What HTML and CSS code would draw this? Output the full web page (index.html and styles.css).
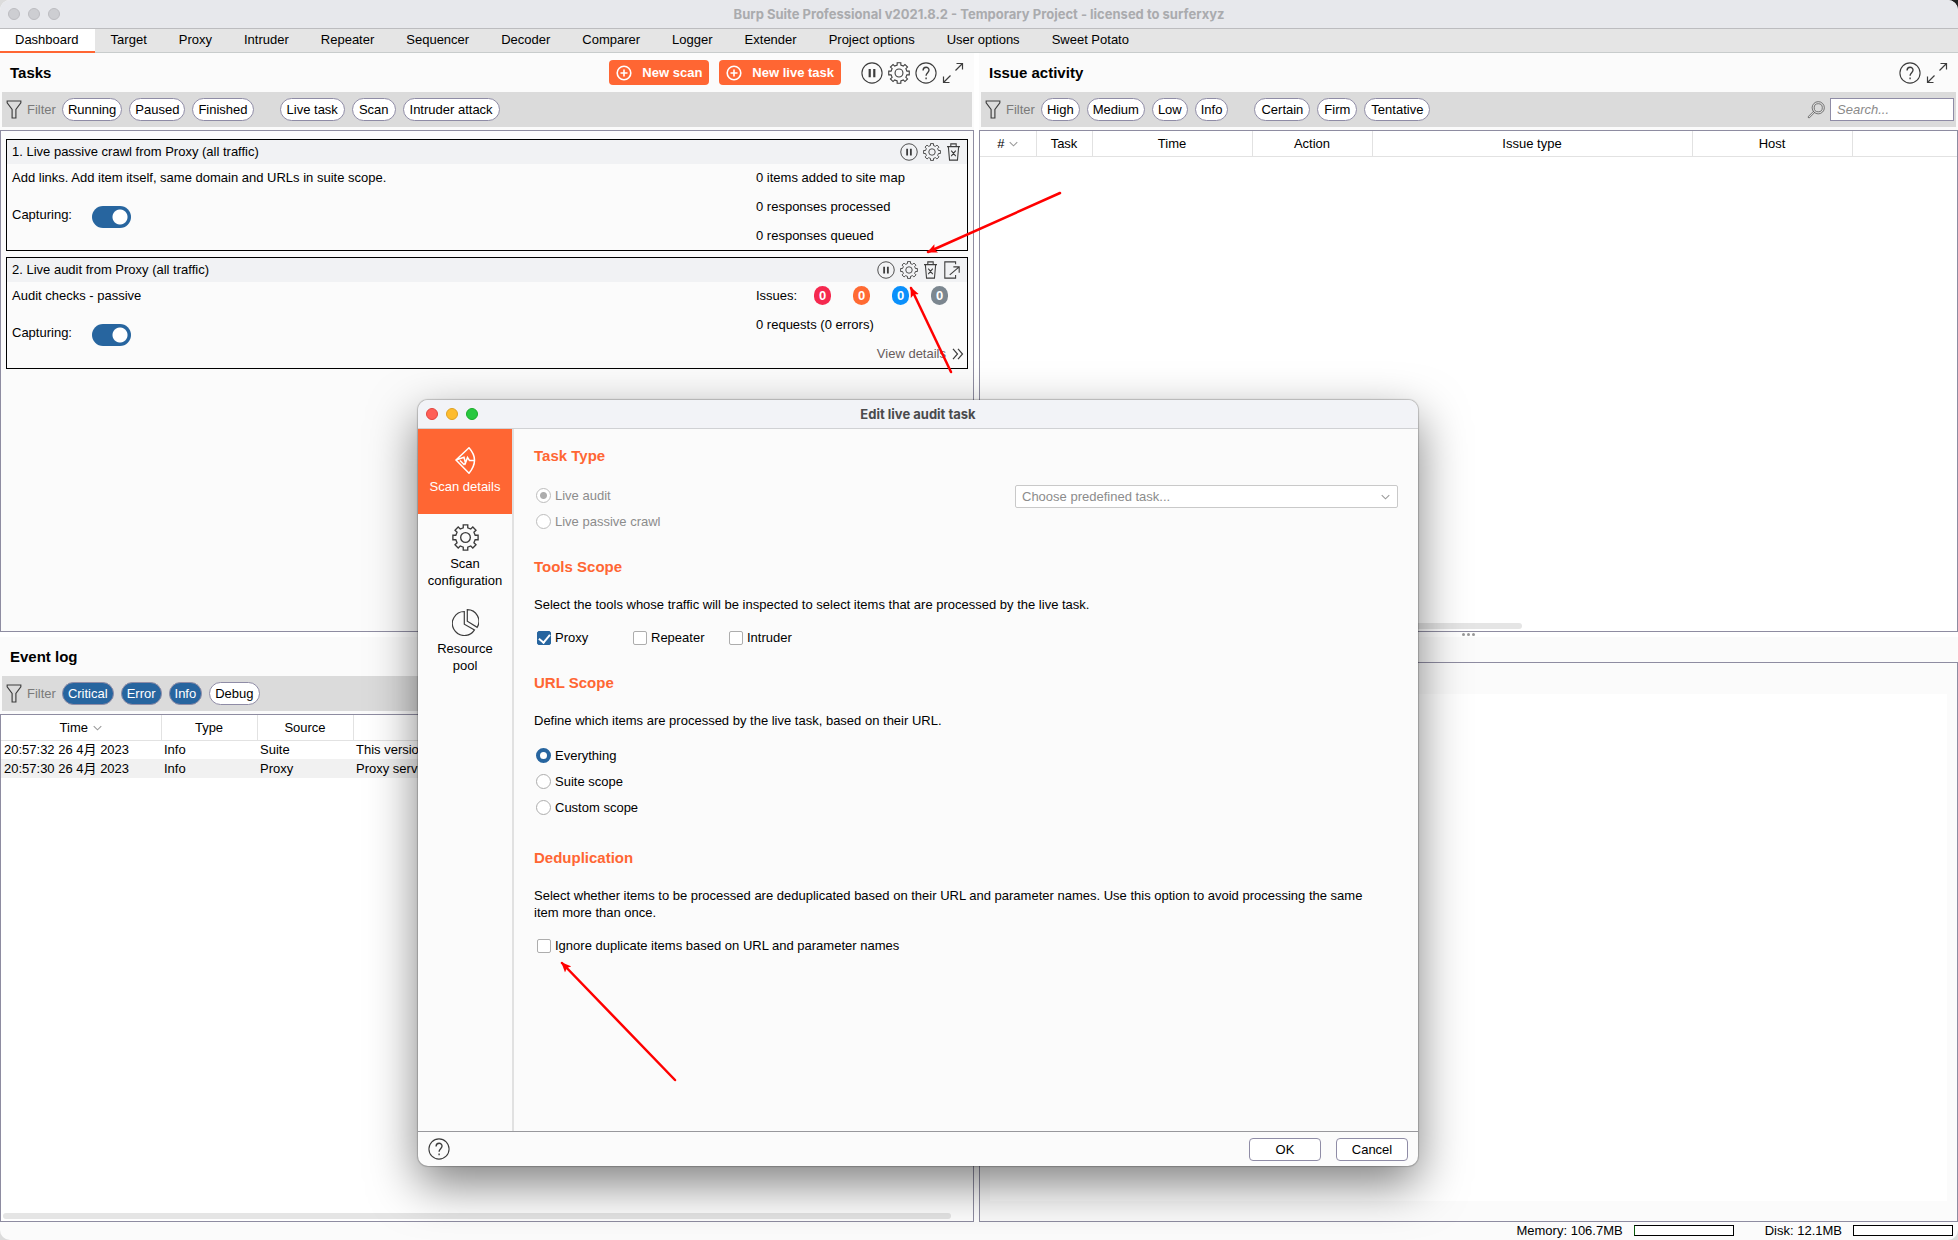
FILE: index.html
```html
<!DOCTYPE html>
<html lang="en">
<head>
<meta charset="utf-8">
<title>Burp Suite Professional</title>
<link rel="stylesheet" href="styles.css">
</head>
<body>
<svg class="defs" aria-hidden="true">
  <symbol id="i-pause" viewBox="0 0 24 24"><circle cx="12" cy="12" r="11"/><path d="M9.5 7.5v9M14.5 7.5v9" stroke-width="2.4"/></symbol>
  <symbol id="i-gear" viewBox="0 0 24 24"><path d="M10 3.4V.8h4v2.6L16.67 4.5 18.5 2.67 21.33 5.5 19.5 7.33 20.6 10H23.2v4H20.6L19.5 16.67 21.33 18.5 18.5 21.33 16.67 19.5 14 20.6V23.2H10V20.6L7.33 19.5 5.5 21.33 2.67 18.5 4.5 16.67 3.4 14H.8V10H3.4L4.5 7.33 2.67 5.5 5.5 2.67 7.33 4.5Z"/><circle cx="12" cy="12" r="4.3"/></symbol>
  <symbol id="i-help" viewBox="0 0 24 24"><circle cx="12" cy="12" r="11"/><path d="M8.8 9.2c0-4.6 6.6-4.4 6.5-.4 0 2.700-3.200 3-3.200 6.200M12.100 17v1.800" stroke-width="1.500"/></symbol>
  <symbol id="i-expand" viewBox="0 0 22 22"><path d="M13.500 8.500 20 2M14.500 1.500h6v6M8.500 13.500 2 20M1.500 14.500v6h6"/></symbol>
  <symbol id="i-trash" viewBox="0 0 16 20"><path d="M.8 4h14.400M5 4V1h6v3M2.300 4.300 3.600 19h8.800L13.700 4.300M5.500 8.500l5 6M10.500 8.500l-5 6"/></symbol>
  <symbol id="i-export" viewBox="0 0 18 20"><path d="M13 3.500V1H1v18h12v-3.500M6.500 15.500 17 6.500M10.500 6.500H17V13"/></symbol>
  <symbol id="i-funnel" viewBox="0 0 16 20"><path d="M.8 1h14.400v2L10 10v9H6v-9L.8 3z"/></symbol>
  <symbol id="i-plus" viewBox="0 0 16 16"><circle cx="8" cy="8" r="6.800"/><path d="M8 4.500v7M4.500 8h7"/></symbol>
  <symbol id="i-sort" viewBox="0 0 10 6"><path d="M.8.8 5 5 9.200.8"/></symbol>
  <symbol id="i-search" viewBox="0 0 20 20"><circle cx="12.500" cy="7.500" r="6.800"/><circle cx="12.500" cy="7.500" r="4.500"/><path d="M7.500 11.200 1 17.700 2.300 19 8.800 12.500"/></symbol>
  <symbol id="i-more" viewBox="0 0 12 12"><path d="M1 .8 5.500 6 1 11.200M6 .8 10.500 6 6 11.200"/></symbol>
  <symbol id="i-scan" viewBox="0 0 27 27"><path d="M4 13 17 .8Q28 13 17 26.200ZM4 13 12 10.200 13.500 16 15.500 10.500 17.500 13.500H23M8 13.500 12 17.500 13.500 16"/></symbol>
  <symbol id="i-pie" viewBox="0 0 27 27"><path d="M12.300 2.500V15.200L22.500 20.900A12 12 0 1 1 12.300 2.500ZM15.300.7A11.600 11.600 0 0 1 25.200 18.300L15.300 12.200Z"/></symbol>
</svg>

<div class="app">
  <header class="titlebar">
    <span class="lights idle"><i></i><i></i><i></i></span>
    <h1 class="window-title">Burp Suite Professional v2021.8.2 - Temporary Project - licensed to surferxyz</h1>
  </header>

  <nav class="tabs">
    <button class="tab active">Dashboard</button>
    <button class="tab">Target</button>
    <button class="tab">Proxy</button>
    <button class="tab">Intruder</button>
    <button class="tab">Repeater</button>
    <button class="tab">Sequencer</button>
    <button class="tab">Decoder</button>
    <button class="tab">Comparer</button>
    <button class="tab">Logger</button>
    <button class="tab">Extender</button>
    <button class="tab">Project options</button>
    <button class="tab">User options</button>
    <button class="tab">Sweet Potato</button>
  </nav>

  <main class="panes">
    <section class="pane">
      <div class="pane-head">
        <h2>Tasks</h2>
        <div class="pane-actions">
          <button class="primary"><svg class="icon16"><use href="#i-plus"/></svg>New scan</button>
          <button class="primary"><svg class="icon16"><use href="#i-plus"/></svg>New live task</button>
        </div>
        <div class="pane-icons">
          <button class="ib" aria-label="Pause"><svg class="icon22"><use href="#i-pause"/></svg></button>
          <button class="ib" aria-label="Settings"><svg class="icon22"><use href="#i-gear"/></svg></button>
          <button class="ib" aria-label="Help"><svg class="icon22"><use href="#i-help"/></svg></button>
          <button class="ib" aria-label="Expand"><svg class="icon22"><use href="#i-expand"/></svg></button>
        </div>
      </div>
      <div class="filter">
        <svg class="funnel"><use href="#i-funnel"/></svg><span class="filter-label">Filter</span>
        <div class="chips"><button class="chip">Running</button><button class="chip">Paused</button><button class="chip">Finished</button></div>
        <div class="chips roomy"><button class="chip">Live task</button><button class="chip">Scan</button><button class="chip">Intruder attack</button></div>
      </div>
      <div class="box task-list">
        <article class="task">
          <header class="task-head">
            <h3>1. Live passive crawl from Proxy (all traffic)</h3>
            <button class="ib" aria-label="Pause"><svg class="icon18"><use href="#i-pause"/></svg></button>
            <button class="ib" aria-label="Settings"><svg class="icon18"><use href="#i-gear"/></svg></button>
            <button class="ib" aria-label="Delete"><svg class="trash"><use href="#i-trash"/></svg></button>
          </header>
          <div class="task-body">
            <div class="task-info">
              <p>Add links. Add item itself, same domain and URLs in suite scope.</p>
              <label class="capture">Capturing:<input type="checkbox" role="switch" class="switch" checked></label>
            </div>
            <div class="task-stats"><p>0 items added to site map</p><p>0 responses processed</p><p>0 responses queued</p></div>
          </div>
        </article>
        <article class="task">
          <header class="task-head">
            <h3>2. Live audit from Proxy (all traffic)</h3>
            <button class="ib" aria-label="Pause"><svg class="icon18"><use href="#i-pause"/></svg></button>
            <button class="ib" aria-label="Settings"><svg class="icon18"><use href="#i-gear"/></svg></button>
            <button class="ib" aria-label="Delete"><svg class="trash"><use href="#i-trash"/></svg></button>
            <button class="ib" aria-label="Open"><svg class="icon18"><use href="#i-export"/></svg></button>
          </header>
          <div class="task-body">
            <div class="task-info">
              <p>Audit checks - passive</p>
              <label class="capture">Capturing:<input type="checkbox" role="switch" class="switch" checked></label>
            </div>
            <div class="task-stats">
              <p class="issues">Issues: <span class="badges"><b class="badge high">0</b><b class="badge medium">0</b><b class="badge low">0</b><b class="badge info">0</b></span></p>
              <p>0 requests (0 errors)</p>
              <p class="more"><a href="#details">View details<svg class="icon12"><use href="#i-more"/></svg></a></p>
            </div>
          </div>
        </article>
      </div>
    </section>

    <section class="pane">
      <div class="pane-head">
        <h2>Issue activity</h2>
        <div class="pane-icons">
          <button class="ib" aria-label="Help"><svg class="icon22"><use href="#i-help"/></svg></button>
          <button class="ib" aria-label="Expand"><svg class="icon22"><use href="#i-expand"/></svg></button>
        </div>
      </div>
      <div class="filter">
        <svg class="funnel"><use href="#i-funnel"/></svg><span class="filter-label">Filter</span>
        <div class="chips"><button class="chip">High</button><button class="chip">Medium</button><button class="chip">Low</button><button class="chip">Info</button></div>
        <div class="chips roomy"><button class="chip">Certain</button><button class="chip">Firm</button><button class="chip">Tentative</button></div>
        <label class="search"><svg class="icon18"><use href="#i-search"/></svg><input type="search" placeholder="Search..." aria-label="Search"></label>
      </div>
      <div class="box plain">
        <table class="grid">
          <colgroup><col class="w56"><col class="w56"><col class="w160"><col class="w120"><col class="w320"><col class="w160"><col></colgroup>
          <thead><tr><th>#<svg class="sort"><use href="#i-sort"/></svg></th><th>Task</th><th>Time</th><th>Action</th><th>Issue type</th><th>Host</th><th></th></tr></thead>
        </table>
        <div class="scroll issue-scroll"></div>
      </div>
    </section>

    <section class="pane">
      <div class="pane-head"><h2>Event log</h2></div>
      <div class="filter">
        <svg class="funnel"><use href="#i-funnel"/></svg><span class="filter-label">Filter</span>
        <div class="chips"><button class="chip on">Critical</button><button class="chip on">Error</button><button class="chip on">Info</button><button class="chip">Debug</button></div>
      </div>
      <div class="box plain">
        <table class="grid">
          <colgroup><col class="w160"><col class="w96"><col class="w96"><col></colgroup>
          <thead><tr><th>Time<svg class="sort"><use href="#i-sort"/></svg></th><th>Type</th><th>Source</th><th></th></tr></thead>
          <tbody>
            <tr><td>20:57:32 26 4月 2023</td><td>Info</td><td>Suite</td><td>This version</td></tr>
            <tr><td>20:57:30 26 4月 2023</td><td>Info</td><td>Proxy</td><td>Proxy service</td></tr>
          </tbody>
        </table>
        <div class="scroll event-scroll"></div>
      </div>
    </section>

    <section class="pane">
      <div class="detail-head"><span class="grip"><i></i><i></i><i></i></span></div>
      <div class="box detail"><div class="detail-view"></div></div>
    </section>
  </main>

  <footer class="status">
    <span>Memory: 106.7MB</span><span class="gauge used"></span>
    <span class="disk">Disk: 12.1MB</span><span class="gauge"></span>
  </footer>

  <section class="dialog" role="dialog" aria-labelledby="dlg-title">
    <header class="dialog-title">
      <span class="lights"><i class="red"></i><i class="amber"></i><i class="green"></i></span>
      <h2 id="dlg-title" class="window-title">Edit live audit task</h2>
    </header>
    <div class="dialog-main">
      <nav class="side">
        <button class="side-item current"><svg class="icon27"><use href="#i-scan"/></svg>Scan details</button>
        <button class="side-item"><svg class="icon27"><use href="#i-gear"/></svg>Scan configuration</button>
        <button class="side-item"><svg class="icon27"><use href="#i-pie"/></svg>Resource<br>pool</button>
      </nav>
      <form class="options">
        <section>
          <h3>Task Type</h3>
          <div class="type-row">
            <div class="radios">
              <label class="off"><input type="radio" name="type" checked disabled>Live audit</label>
              <label class="off"><input type="radio" name="type" disabled>Live passive crawl</label>
            </div>
            <div class="select"><select disabled aria-label="Predefined task"><option>Choose predefined task...</option></select><svg class="sort"><use href="#i-sort"/></svg></div>
          </div>
        </section>
        <section>
          <h3>Tools Scope</h3>
          <p>Select the tools whose traffic will be inspected to select items that are processed by the live task.</p>
          <div class="checks">
            <label><input type="checkbox" checked>Proxy</label>
            <label><input type="checkbox">Repeater</label>
            <label><input type="checkbox">Intruder</label>
          </div>
        </section>
        <section class="scope">
          <h3>URL Scope</h3>
          <p>Define which items are processed by the live task, based on their URL.</p>
          <div class="radios">
            <label><input type="radio" name="scope" checked>Everything</label>
            <label><input type="radio" name="scope">Suite scope</label>
            <label><input type="radio" name="scope">Custom scope</label>
          </div>
        </section>
        <section>
          <h3>Deduplication</h3>
          <p>Select whether items to be processed are deduplicated based on their URL and parameter names. Use this option to avoid processing the same item more than once.</p>
          <div class="checks"><label><input type="checkbox">Ignore duplicate items based on URL and parameter names</label></div>
        </section>
      </form>
    </div>
    <footer class="dialog-foot">
      <button class="ib" aria-label="Help"><svg class="icon22"><use href="#i-help"/></svg></button>
      <div class="dialog-buttons"><button class="plain-btn">OK</button><button class="plain-btn">Cancel</button></div>
    </footer>
  </section>

  <svg class="arrows" viewBox="0 0 1958 1240" width="1958" height="1240" aria-hidden="true">
    <defs><marker id="head" viewBox="0 0 10 10" refX="9" refY="5" markerWidth="10" markerHeight="10" markerUnits="userSpaceOnUse" orient="auto"><path d="M0 .5 10 5 0 9.500 2 5Z" fill="#f00"/></marker></defs>
    <path d="M1060 193 928 252" marker-end="url(#head)"/>
    <path d="M951 372 911 288" marker-end="url(#head)"/>
    <path d="M675 1080 562 963" marker-end="url(#head)"/>
  </svg>
</div>
</body>
</html>
```
FILE: styles.css
```css
* { box-sizing: border-box; }
body {
  margin: 0;
  background: linear-gradient(to top right, #dcdcdc 98%, #222 99%);
  color: #000;
  font: 13px/17px "Liberation Sans", Arial, "Noto Sans CJK SC", sans-serif;
}
h1, h2, h3, p { margin: 0; font-size: 13px; font-weight: normal; }
button, input, select { font: inherit; color: inherit; margin: 0; }
button { white-space: nowrap; }
svg { display: block; flex: none; fill: none; stroke: #3d3d3d; stroke-width: 1.2; }
.defs { position: absolute; width: 0; height: 0; }

.app {
  position: relative;
  display: flex;
  flex-direction: column;
  min-height: 100vh;
  overflow: hidden;
  background: #fbfbfb;
  border-radius: 10px;
}

/* window chrome */
.titlebar, .dialog-title {
  display: grid;
  grid-template-columns: 1fr auto 1fr;
  align-items: center;
  height: 29px;
  border-bottom: 1px solid #bcbcbf;
  background: #e7e8ec;
}
.window-title { font: 700 13px/17px "Inter", "Liberation Sans", sans-serif; color: #aaabae; }
.lights { display: flex; gap: 8px; padding-left: 8px; }
.lights i { width: 12px; height: 12px; border-radius: 50%; border: 1px solid #bcbcc0; background: #cdced2; }
.lights .red { background: #ff5f57; border-color: #e0443e; }
.lights .amber { background: #febc2e; border-color: #dea123; }
.lights .green { background: #28c840; border-color: #1aab29; }

.tabs { display: flex; height: 24px; background: #e5e5e5; border-bottom: 1px solid #c8cccc; }
.tab { height: 24px; padding: 0 16px 3px; border: 0; background: none; }
.tab.active { background: #fff; border-bottom: 2px solid #ff6633; padding: 0 16px 1px 15px; }

/* panes */
.panes {
  flex: 1;
  display: grid;
  grid-template-columns: minmax(0, 974fr) minmax(0, 979fr);
  grid-template-rows: 579fr 585fr;
  gap: 5px;
  background: #fff;
}
.pane { display: flex; flex-direction: column; background: #fbfbfb; min-height: 0; }
.pane-head { display: flex; align-items: center; height: 39px; padding: 0 10px; }
.pane-head h2 { flex: 1; font-size: 15px; font-weight: bold; }
.pane-actions { display: flex; gap: 10px; margin-right: 20px; }
.pane-icons { display: flex; gap: 5px; }
.primary {
  display: flex;
  align-items: center;
  gap: 10px;
  height: 25px;
  padding: 0 7px;
  border: 0;
  border-radius: 4px;
  background: #ff6633;
  color: #fff;
  font-weight: bold;
}
.primary svg { stroke: #fff; stroke-width: 1.6; }
.ib { display: flex; padding: 0; border: 0; background: none; }
.icon12 { width: 12px; height: 12px; }
.icon16 { width: 16px; height: 16px; }
.icon18 { width: 18px; height: 18px; }
.icon22 { width: 22px; height: 22px; }
.icon27 { width: 27px; height: 27px; }
.trash { width: 15px; height: 18px; }
.funnel { width: 16px; height: 19px; }

.filter {
  display: flex;
  align-items: center;
  height: 35px;
  margin: 0 2px 3px;
  padding: 0 2px 0 4px;
  background: #dbdbdb;
}
.filter-label { margin: 0 6px 0 5px; color: #7a7a7a; }
.chips { display: flex; gap: 7px; margin-right: 26px; }
.chip { height: 23px; padding: 0 5px; border: 1px solid #8f8ca6; border-radius: 12px; background: #fff; }
.roomy .chip { padding: 0 6px; }
.chip.on { background: #27659f; color: #fff; }
.search { display: flex; align-items: center; gap: 5px; margin-left: auto; }
.search input { width: 124px; height: 23px; padding: 0 6px; border: 1px solid #8f8ca6; border-radius: 0; background: #fff; font-style: italic; outline: 0; }
.search svg { stroke: #505050; stroke-width: 0.8; }
.search input::placeholder { color: #8a8a8a; opacity: 1; }

.box { flex: 1; display: flex; flex-direction: column; border: 1px solid #8e8ca1; }
.box.plain { background: #fff; }

/* task cards */
.task-list { padding: 8px 5px 0; gap: 6px; }
.task { height: 112px; border: 1px solid #000; background: #fbfbfb; }
.task-head { display: flex; align-items: center; gap: 5px; height: 24px; padding: 0 6px 0 5px; background: #f1f2f4; }
.task-head h3 { flex: 1; padding-bottom: 2px; }
.task-body { display: grid; grid-template-columns: minmax(0, 1fr) 208px; padding: 0 3px 0 5px; }
.task-info { display: flex; flex-direction: column; gap: 20px; padding-top: 5px; }
.capture { display: flex; align-items: flex-start; gap: 20px; }
.task-stats { display: flex; flex-direction: column; gap: 12px; padding-top: 5px; }
.issues { display: flex; align-items: center; gap: 17px; }
.badges { display: flex; gap: 22px; }
.badge { width: 17px; height: 19px; margin: -1px 0; border-radius: 9px; color: #fff; text-align: center; line-height: 19px; }
.high { background: #f5294f; }
.medium { background: #ff6a33; }
.low { background: #0a90fb; }
.info { background: #7c8790; }
.more a { display: flex; align-items: center; justify-content: flex-end; gap: 6px; color: #675b5b; text-decoration: none; }
.switch {
  appearance: none;
  width: 39px;
  height: 22px;
  border-radius: 11px;
  background: radial-gradient(circle at 28px 11px, #fff 7px, #27659f 8px);
}

/* tables */
.grid { width: 100%; border-collapse: collapse; table-layout: fixed; }
.w56 { width: 56px; }
.w96 { width: 96px; }
.w120 { width: 120px; }
.w160 { width: 160px; }
.w320 { width: 320px; }
.grid th { height: 25px; padding: 0; font-weight: normal; border-right: 1px solid #e2e2e2; border-bottom: 1px solid #e2e2e2; }
.grid th:last-child { border-right: 0; }
.grid td { height: 19px; padding: 0 3px; white-space: nowrap; overflow: hidden; }
.grid tbody tr:nth-child(even) { background: #f1f1f1; }
.sort { display: inline-block; width: 9px; height: 6px; margin: 0 0 1px 5px; stroke: #9a9a9a; }
.scroll { height: 6px; margin: auto 2px 2px; border-radius: 3px; background: #e5e5e5; }
.issue-scroll { width: 540px; }
.event-scroll { width: 948px; max-width: 98%; }

.detail-head { height: 25px; }
.grip { display: flex; justify-content: center; gap: 2px; margin-top: -4px; }
.grip i { width: 3px; height: 3px; border-radius: 50%; background: #999; }
.detail { padding: 31px 10px 20px; }
.detail-view { flex: 1; background: #fff; }

.status { display: flex; align-items: center; justify-content: flex-end; height: 18px; gap: 11px; padding: 0 5px 2px 0; }
.gauge { width: 100px; height: 11px; border: 1px solid #000; background: #fff; }
.gauge.used { border-left-color: #0a5a0a; }
.disk { margin-left: 20px; }

/* dialog */
.dialog {
  position: absolute;
  left: 418px;
  top: 400px;
  width: 1000px;
  height: 766px;
  display: flex;
  flex-direction: column;
  border-radius: 10px;
  overflow: hidden;
  background: #fbfbfb;
  box-shadow: 0 0 1px 1px rgba(0, 0, 0, .2), 0 18px 48px rgba(0, 0, 0, .5);
}
.dialog-title { background: #f2f3f7; border-color: #d0d1d4; }
.dialog-title .window-title { color: #4b4b4d; }
.dialog-main { flex: 1; display: flex; }
.side { width: 96px; border-right: 2px solid #e1e1e1; }
.side-item {
  display: flex;
  flex-direction: column;
  align-items: center;
  justify-content: center;
  gap: 4px;
  width: 100%;
  height: 85px;
  padding: 0;
  border: 0;
  background: none;
  white-space: normal;
  line-height: 17px;
}
.side-item.current { padding-bottom: 2px; background: #ff6633; color: #fff; }
.side-item.current svg { stroke: #fff; stroke-width: 1.5; }
.options { flex: 1; padding: 17px 20px 0; }
.options section { margin-bottom: 27px; }
.options .scope { margin-bottom: 32px; }
.scope .radios { padding-top: 2px; }
.options h3 { font-size: 15px; line-height: 20px; font-weight: bold; color: #ff6633; }
.options p { max-width: 850px; margin: 19px 0 16px; }
.type-row { display: flex; justify-content: space-between; align-items: flex-start; padding-top: 19px; }
.radios { display: flex; flex-direction: column; gap: 9px; padding-left: 2px; }
.type-row .radios { padding-top: 2px; }
.radios label, .checks label { display: flex; align-items: center; gap: 4px; }
.radios input {
  appearance: none;
  width: 15px;
  height: 15px;
  border: 1px solid #adadad;
  border-radius: 50%;
  background: #fff;
}
.radios input:checked { border: 4px solid #27659f; }
.off { color: #8c8c8c; }
.radios .off input { border-color: #bdbdbd; }
.radios .off input:checked { border: 1px solid #bdbdbd; background: radial-gradient(circle, #adadad 3px, #fff 4px); }
.checks { display: flex; padding-left: 3px; }
.checks label { min-width: 96px; }
.checks input {
  appearance: none;
  display: grid;
  place-items: start center;
  width: 14px;
  height: 14px;
  border: 1px solid #adadad;
  border-radius: 2px;
  background: #fff;
}
.checks input:checked { background: #27659f; border-color: #27659f; }
.checks input:checked::before { content: ""; width: 5px; height: 9px; border: solid #fff; border-width: 0 2px 2px 0; rotate: 40deg; }
.select { display: flex; align-items: center; width: 383px; height: 23px; padding-right: 7px; border: 1px solid #c9c9c9; border-radius: 2px; background: #fff; }
.select select { flex: 1; appearance: none; border: 0; padding: 0 6px; background: none; color: #8c8c8c; opacity: 1; }
.select .sort { margin: 0; }
.dialog-foot { display: flex; align-items: center; justify-content: space-between; height: 35px; padding: 0 10px; border-top: 1px solid #98989c; }
.dialog-buttons { display: flex; gap: 15px; }
.plain-btn { width: 72px; height: 23px; padding: 0; border: 1px solid #8f8ca6; border-radius: 4px; background: #fff; }

.arrows { position: absolute; left: 0; top: 0; stroke: #f00; stroke-width: 2.5; stroke-linecap: round; pointer-events: none; }
.arrows marker path { stroke: none; }
```
